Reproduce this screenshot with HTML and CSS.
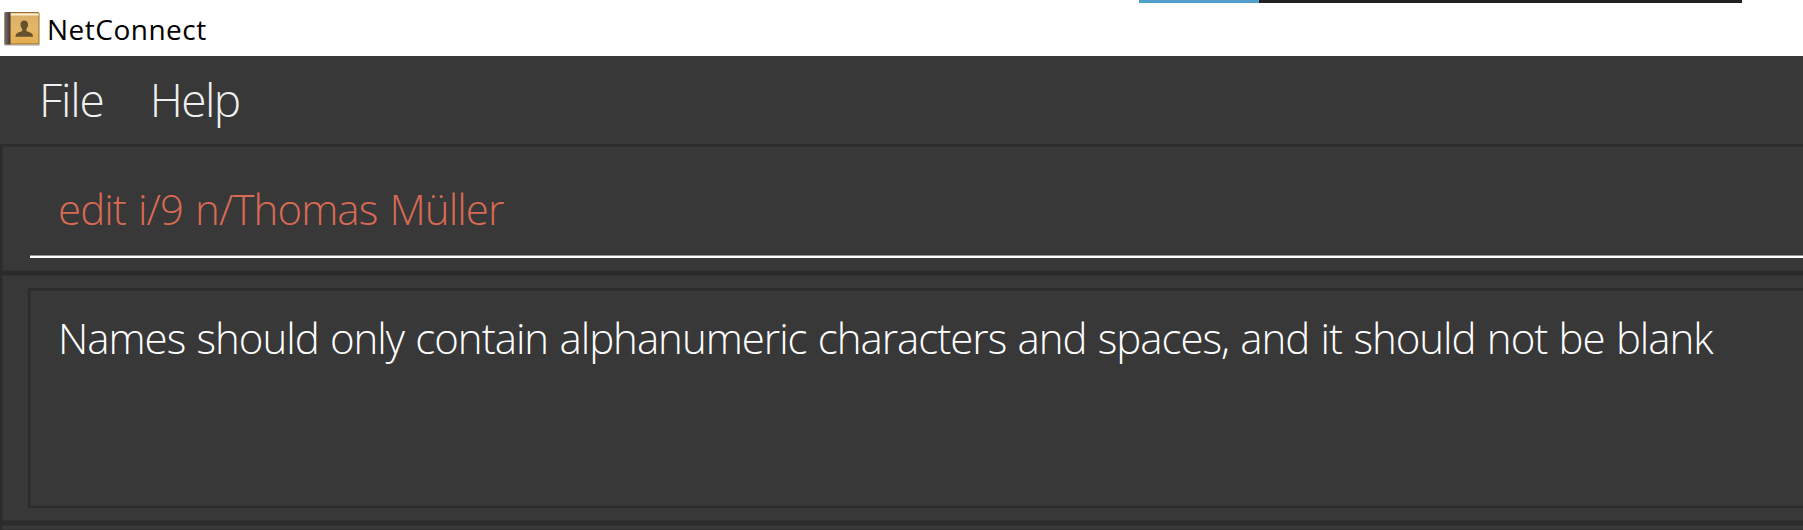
FILE: index.html
```html
<!DOCTYPE html>
<html lang="en">
<head>
<meta charset="utf-8">
<title>NetConnect</title>
<link rel="stylesheet" href="styles.css">
</head>
<body>
<div class="window">
  <div class="backdrop-strip"><span class="strip-accent"></span><span class="strip-dark"></span></div>
  <header class="titlebar">
    <svg class="app-icon" viewBox="0 0 38 38" width="38" height="38">
      <defs>
        <linearGradient id="cover" x1="0" y1="0" x2="0" y2="1"><stop offset="0" stop-color="#d9ae69"/><stop offset=".5" stop-color="#e2b767"/><stop offset="1" stop-color="#e3ad50"/></linearGradient>
        <linearGradient id="spine" x1="0" y1="0" x2="1" y2="0"><stop offset="0" stop-color="#7a6c69"/><stop offset=".6" stop-color="#5d4f4d"/><stop offset="1" stop-color="#3f302a"/></linearGradient>
      </defs>
      <rect x="1" y="33" width="36" height="3" rx="1" fill="#000" opacity=".18"/>
      <rect x="1.5" y="2" width="35" height="32.500" rx="1.500" fill="#9b7032"/>
      <rect x="7" y="3" width="28.500" height="30.500" fill="url(#cover)"/>
      <rect x="7" y="3.500" width="28.500" height="2" fill="#faecce"/>
      <rect x="1.500" y="2" width="6" height="32.500" rx="1" fill="url(#spine)"/>
      <path d="M21.200 10.500c-2.500 0-3.900 1.700-3.700 4.500.1 1.700.9 3 1.700 3.900v1.900c-.7 1.300-5.900 1.300-6.600 4.500v1.400h17.300v-1.400c-.7-3.200-5.800-3.200-6.500-4.500v-1.900c.8-.9 1.500-2.200 1.600-3.900.2-2.800-1.300-4.500-3.800-4.500z" fill="#67502c"/>
    </svg>
    <span class="app-name">NetConnect</span>
  </header>
  <nav class="menubar"><span class="menu-file">File</span><span class="menu-help">Help</span></nav>
  <section class="pane command-pane">
    <div class="command-field"><span class="command-text">edit i/9 n/Thomas Müller</span></div>
  </section>
  <section class="pane result-pane">
    <div class="result-box"><span class="result-text">Names should only contain alphanumeric characters and spaces, and it should not be blank</span></div>
  </section>
  <section class="pane list-pane"></section>
</div>
</body>
</html>
```
FILE: styles.css
```css
* { box-sizing: border-box; }
body { margin: 0; background: #383838; font-family: "Open Sans", "Noto Sans", sans-serif; }
.window { position: relative; display: flex; flex-direction: column; width: 1803px; height: 530px; overflow: hidden; }
.backdrop-strip { position: absolute; top: 0; left: 1139px; display: flex; width: 603px; height: 3px; }
.strip-accent { width: 120px; background: #539fcc; }
.strip-dark { flex: 1; background: #222021; }
.titlebar { flex: 0 0 56px; display: flex; align-items: flex-start; padding: 10px 0 0 3px; background: #fff; }
.app-icon { flex: none; }
.app-name { margin-left: 6px; font-size: 28px; line-height: 38px; letter-spacing: 0.5px; color: #000; }
.menubar { flex: 0 0 88px; display: flex; padding-left: 39px; font-size: 46px; font-weight: 300; line-height: 86px; color: #f0f0f0; }
.menu-file { letter-spacing: -1.1px; }
.menu-help { margin-left: 46px; letter-spacing: -1.6px; }
.pane { border: 2px solid #2b2b2b; border-right: 0; background: #383838; box-shadow: inset 1px 1px #313131, inset 0 -1px #313131; white-space: nowrap; }
.command-pane { flex: 0 0 129px; padding: 26px 0 0 28px; }
.command-field { height: 86px; padding-left: 28px; border-bottom: 2px solid #fff; box-shadow: inset 0 -1px #949494; font-size: 42px; font-weight: 300; line-height: 73px; letter-spacing: -0.9px; word-spacing: 2px; color: #d96a54; }
.result-pane { flex: 0 0 250px; padding: 13px 0 0 26px; }
.result-box { height: 220px; padding: 14px 0 0 28px; border: 2px solid #2b2b2b; border-right: 0; box-shadow: inset 1px 1px #323232; font-size: 42px; font-weight: 300; line-height: 68px; letter-spacing: -1.02px; word-spacing: 1.4px; color: #fff; }
.list-pane { flex: 1; border-bottom: 0; }
```
